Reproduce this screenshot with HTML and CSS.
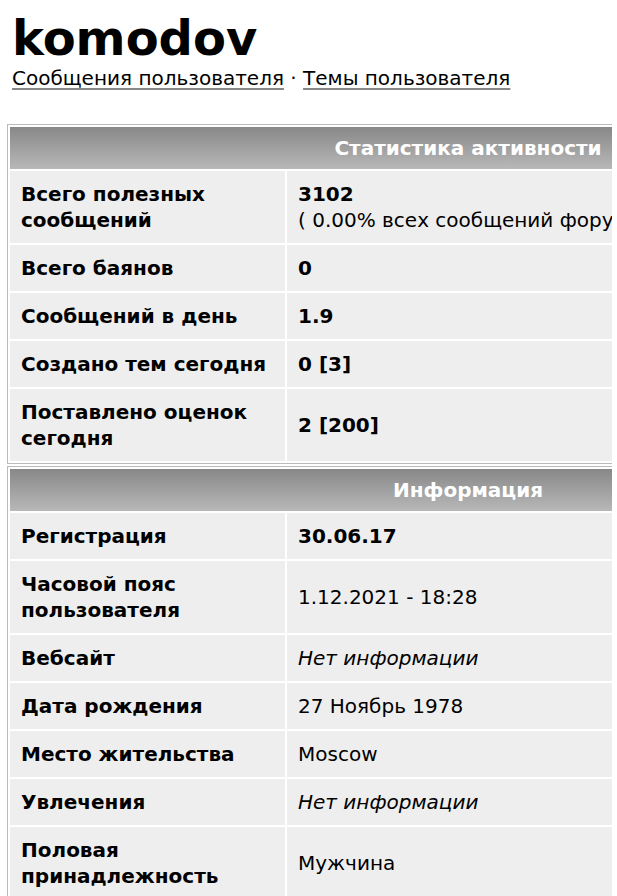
FILE: index.html
```html
<!DOCTYPE html>
<html>
  <head>
    <title>komodov - Профиль</title>
    <link rel="stylesheet" href="styles.css">
  </head>
  <body>
    <div class="page">
      <div class="user-head">
        <h1>komodov</h1>
        <div class="user-links">
          <a href="#">Сообщения пользователя</a> · <a href="#">Темы пользователя</a>
        </div>
      </div>

      <table class="block">
        <tr><th colspan="2">Статистика активности</th></tr>
        <tr>
          <td class="label">Всего полезных сообщений</td>
          <td class="value"><b>3102</b><br>( 0.00% всех сообщений форума / 1.9 сообщений в день )</td>
        </tr>
        <tr><td class="label">Всего баянов</td><td class="value"><b>0</b></td></tr>
        <tr><td class="label">Сообщений в день</td><td class="value"><b>1.9</b></td></tr>
        <tr><td class="label">Создано тем сегодня</td><td class="value"><b>0 [3]</b></td></tr>
        <tr><td class="label">Поставлено оценок сегодня</td><td class="value"><b>2 [200]</b></td></tr>
      </table>

      <table class="block">
        <tr><th colspan="2">Информация</th></tr>
        <tr><td class="label">Регистрация</td><td class="value"><b>30.06.17</b></td></tr>
        <tr><td class="label">Часовой пояс пользователя</td><td class="value">1.12.2021 - 18:28</td></tr>
        <tr><td class="label">Вебсайт</td><td class="value"><i>Нет информации</i></td></tr>
        <tr><td class="label">Дата рождения</td><td class="value">27 Ноябрь 1978</td></tr>
        <tr><td class="label">Место жительства</td><td class="value">Moscow</td></tr>
        <tr><td class="label">Увлечения</td><td class="value"><i>Нет информации</i></td></tr>
        <tr><td class="label">Половая принадлежность</td><td class="value">Мужчина</td></tr>
      </table>
    </div>
  </body>
</html>
```

FILE: styles.css
```css
/* profile page */
body { margin: 0; background: #fff; color: #000; font-family: "DejaVu Sans", Verdana, sans-serif; }
.page { margin: 0 5px 0 7px; overflow: hidden; }

.user-head { padding-left: 5px; }
h1 { margin: 0; padding-top: 15px; font-size: 48px; line-height: 47px; font-weight: bold; }
.user-links { font-size: 20px; line-height: 26px; margin-top: 3px; }
.user-links a { color: #000; text-decoration: underline; text-decoration-color: #888; text-decoration-thickness: 2px; text-underline-offset: 3px; }

/* stat / info blocks */
table.block { width: 922px; border: 1px solid #bbb; border-spacing: 2px; margin-top: 33px; font-size: 20px; line-height: 26px; }
table.block + table.block { margin-top: 2px; }
table.block th { background: linear-gradient(#888, #b8b8b8); color: #fff; font-weight: bold; text-align: center; padding: 8px 10px; }
table.block td { background: #eee; padding: 10px 11px; vertical-align: middle; }
td.label { width: 253px; font-weight: bold; }
td.value { white-space: nowrap; }
```
